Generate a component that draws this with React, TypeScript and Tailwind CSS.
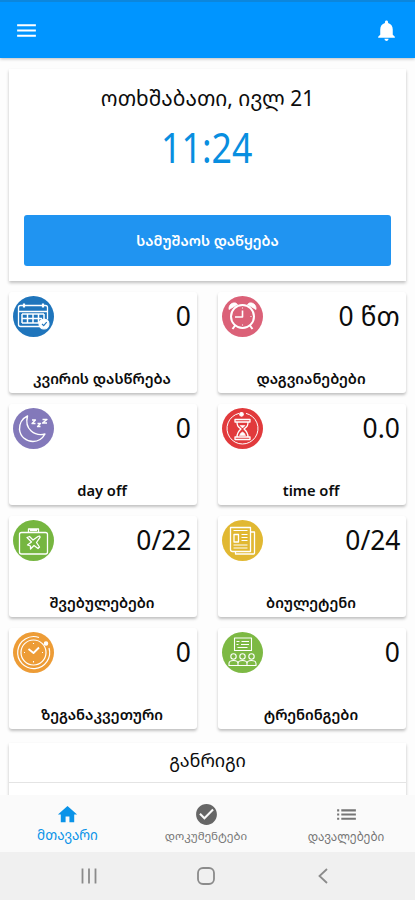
import React from 'react';
import { MdCheckCircle, MdHome, MdList, MdMenu, MdNotifications } from 'react-icons/md';

interface Stat {
  label: string;
  value: string;
  color: string;
  icon: React.ReactNode;
}

const stats: Stat[] = [
  {
    label: 'კვირის დასწრება',
    value: '0',
    color: '#1f75bc',
    icon: (
      <>
        <path d="M5.500 11.500q0-2 2-2h25q2 0 2 2v4h-29zM5.500 15.500v13q0 2 2 2h20M34.500 15.500v8" strokeWidth="1.300" />
        <path d="M11 7.500v4M30 7.500v4" strokeWidth="2.200" />
        <path d="M9 18h22M9 22.500h20M9 27h18M9 18v9M14.500 18v9M20 18v9M25.500 18v9M31 18v5" strokeWidth="1.500" />
        <circle cx="31" cy="28" r="5" fill="#fff" />
        <path d="M29 28l1.700 1.700 3-3.500" stroke="#1f75bc" />
      </>
    ),
  },
  {
    label: 'დაგვიანებები',
    value: '0 წთ',
    color: '#db6178',
    icon: (
      <>
        <circle cx="20.500" cy="20.500" r="11.500" strokeWidth="2" />
        <path d="M13.500 29l-3 4M27.500 29l3 4" strokeWidth="2" />
        <path d="M7 13.500q-.5-5 4-6.500q3-.7 4.500 1.500zM34 13.500q.5-5-4-6.500q-3-.7-4.500 1.500z" fill="#fff" strokeWidth=".8" />
        <path d="M20.500 14.500v6.500h-7.500" strokeWidth="1.600" />
        <path d="M20.500 11.500v1M20.500 28.500v1M28.500 20.500h1" />
      </>
    ),
  },
  {
    label: 'day off',
    value: '0',
    color: '#8379ba',
    icon: (
      <>
        <path d="M14.500 8C9 10.500 6.200 16 6.500 21.500c.8 7.500 7 12 13.500 12 5 0 9.500-3 12-7.500C22 28.500 11 21.500 14.500 8z" strokeWidth="1.400" />
        <path d="M19 12h3.500L19 15.500h3.500M24.500 15.500h3l-3 3h3M29.500 11.500h4.500L29.500 15h4.500" strokeWidth="1.300" />
      </>
    ),
  },
  {
    label: 'time off',
    value: '0.0',
    color: '#e13a3c',
    icon: (
      <>
        <path d="M17 5.400A15.500 15.500 0 1 0 24 5.400" strokeWidth="1" />
        <circle cx="19.500" cy="6.300" r="1.800" fill="#fff" />
        <path d="M13 11.500h15v2.500H13zM13 29h15v2.500H13zM15 14c0 4 1 4.500 4 7-3 2.500-4 4-4 8M26 14c0 4-1 4.500-4 7 3 2.500 4 4 4 8" strokeWidth="1.300" />
        <path d="M18 17.500h5l-2.500 2.500zM17.500 27.500q1-3 3-3.500 2 .5 3 3.500z" fill="#fff" strokeWidth=".6" />
      </>
    ),
  },
  {
    label: 'შვებულებები',
    value: '0/22',
    color: '#76b640',
    icon: (
      <>
        <rect x="6.500" y="12.500" width="28" height="21.500" rx="2" strokeWidth="1.300" />
        <path d="M15.500 12v-3h10v3M17 10.500h7" strokeWidth="1.300" />
        <path d="M14 17.500l2.500-1 3.500 3.500 5-3.500q2-1 2 .8L23.500 22.500l3 4.500-1.500 1.500-4-3-3.500 3.500v-3l-3-1 4-3z" strokeWidth="1.300" />
      </>
    ),
  },
  {
    label: 'ბიულეტენი',
    value: '0/24',
    color: '#e1b832',
    icon: (
      <>
        <path d="M8.500 7.500h20v24H10.500q-2 0-2-2z" strokeWidth="1.300" />
        <path d="M28.500 12h4v21q0 1-1 1H13.500v-2.500" strokeWidth="1.300" />
        <path d="M11.500 10.500h14M19.500 14.500h6M19.500 17.500h6M19.500 20.500h6M11.500 25h14M11.500 28h14" strokeWidth="1" />
        <rect x="12" y="14.500" width="4.500" height="7.500" strokeWidth="1.300" />
      </>
    ),
  },
  {
    label: 'ზეგანაკვეთური',
    value: '0',
    color: '#ed9c36',
    icon: (
      <>
        <circle cx="20.500" cy="20.500" r="12.500" strokeWidth="1.200" />
        <path d="M26 5.500A16 16 0 1 0 36 16" strokeWidth="1.200" />
        <circle cx="33" cy="11.500" r="1.700" fill="#fff" />
        <path d="M15.500 17l5 4 5.500-5.500" strokeWidth="1.800" />
        <path d="M20.500 11v1M20.500 29v1.500M11 20.500h1M29 20.500h1" />
      </>
    ),
  },
  {
    label: 'ტრენინგები',
    value: '0',
    color: '#7db944',
    icon: (
      <>
        <rect x="12.500" y="6" width="17" height="12.500" />
        <path d="M14.500 9.500h3M19.500 9.500h7.500M14.500 12.500h2M19 12.500h8M15.500 15.500h10" strokeWidth="1.200" />
        <circle cx="11.500" cy="24.500" r="2.700" />
        <circle cx="20.500" cy="24.500" r="2.700" />
        <circle cx="29.500" cy="24.500" r="2.700" />
        <path d="M7 33.500v-2q0-3 4.500-3t4.500 3v2zM16 33.500v-2q0-3 4.500-3t4.500 3v2zM25 33.500v-2q0-3 4.500-3t4.500 3v2z" />
      </>
    ),
  },
];

const cardShadow = 'shadow-[0_2px_3px_rgba(0,0,0,0.24)]';

const StatCard: React.FC<{ stat: Stat }> = ({ stat }) => {
  return (
    <div className={`flex h-[101px] flex-col justify-between rounded-[3px] bg-white pt-1 pr-1.5 pb-[5px] pl-1 ${cardShadow}`}>
      <div className="flex items-start justify-between">
        <svg width="41" height="41" viewBox="0 0 41 41" fill="none" stroke="#fff" strokeWidth="1.1" strokeLinejoin="round">
          <circle cx="20.5" cy="20.5" r="20.5" fill={stat.color} stroke="none" />
          {stat.icon}
        </svg>
        <span className="origin-right scale-x-[0.96] pt-[3px] text-[27.5px] leading-[34px] whitespace-nowrap">
          {stat.value}
        </span>
      </div>
      <div className="text-center text-[14.7px] leading-5 font-semibold whitespace-nowrap">{stat.label}</div>
    </div>
  );
};

const App: React.FC = () => {
  return (
    <div className="flex h-[900px] w-[415px] flex-col overflow-hidden bg-[#fdfdfd] font-['Noto_Sans','Noto_Sans_Georgian','DejaVu_Sans',sans-serif] text-[#0c0c0c]">
      <header className="z-10 flex h-[58px] shrink-0 items-center justify-between border-t-2 border-[#0c86dc] bg-[#0095ff] px-4 text-white shadow-[0_1px_3px_rgba(0,0,0,0.25)]">
        <MdMenu className="-ml-0.5 size-[25px]" />
        <MdNotifications className="size-[25px]" />
      </header>

      <main className="flex min-h-0 grow flex-col overflow-hidden px-[9px] pt-[11px]">
        <section className={`flex h-[212px] shrink-0 flex-col items-center bg-white px-[15px] pt-[14px] ${cardShadow}`}>
          <div className="text-[20.9px] leading-[30px] whitespace-nowrap">ოთხშაბათი, ივლ 21</div>
          <div className="mt-1.5 -ml-0.5 scale-x-[0.85] text-[42px] leading-[56px] text-[#088ee0]">11:24</div>
          <button className="mt-10 h-[51px] w-full rounded-[3px] bg-[#2094f1] text-[14.5px] font-semibold text-white">
            სამუშაოს დაწყება
          </button>
        </section>

        <section className="mt-[11px] grid shrink-0 grid-cols-2 gap-x-[21px] gap-y-[11px]">
          {stats.map((stat) => (
            <StatCard key={stat.label} stat={stat} />
          ))}
        </section>

        <section className={`mt-[14px] h-[100px] shrink-0 bg-white ${cardShadow}`}>
          <h2 className="h-10 border-b border-[#e4e4e4] text-center text-[18px] leading-[35px]">განრიგი</h2>
        </section>
      </main>

      <nav className="z-10 grid h-[57px] shrink-0 grid-cols-[135px_1fr_138px] bg-[#fafafa] pt-[7px] text-[#757575]">
        <div className="flex flex-col items-center pt-px text-[#0a93e8]">
          <MdHome className="size-[23px]" />
          <span className="text-[13.5px] leading-[18px]">მთავარი</span>
        </div>
        <div className="flex flex-col items-center">
          <MdCheckCircle className="size-[25px] text-[#666]" />
          <span className="text-[11.5px] leading-[18px]">დოკუმენტები</span>
        </div>
        <div className="flex flex-col items-center">
          <MdList className="size-[25px]" />
          <span className="text-[11.7px] leading-[18px]">დავალებები</span>
        </div>
      </nav>

      <footer className="z-10 flex h-12 shrink-0 items-center justify-between bg-[#f0f0f0] pr-[83px] pl-[80px]">
        <svg width="18" height="18" viewBox="0 0 18 18" stroke="#8b8b8b" strokeWidth="1.8">
          <path d="M2.500 1.500v15M9 1.500v15M15.500 1.500v15" />
        </svg>
        <svg width="18" height="18" viewBox="0 0 18 18" fill="none" stroke="#8b8b8b" strokeWidth="1.8">
          <rect x="1" y="1" width="16" height="16" rx="5" />
        </svg>
        <svg width="18" height="18" viewBox="0 0 18 18" fill="none" stroke="#8b8b8b" strokeWidth="1.8">
          <path d="M13 2L5.500 9l7.500 7" />
        </svg>
      </footer>
    </div>
  );
};

export default App;
